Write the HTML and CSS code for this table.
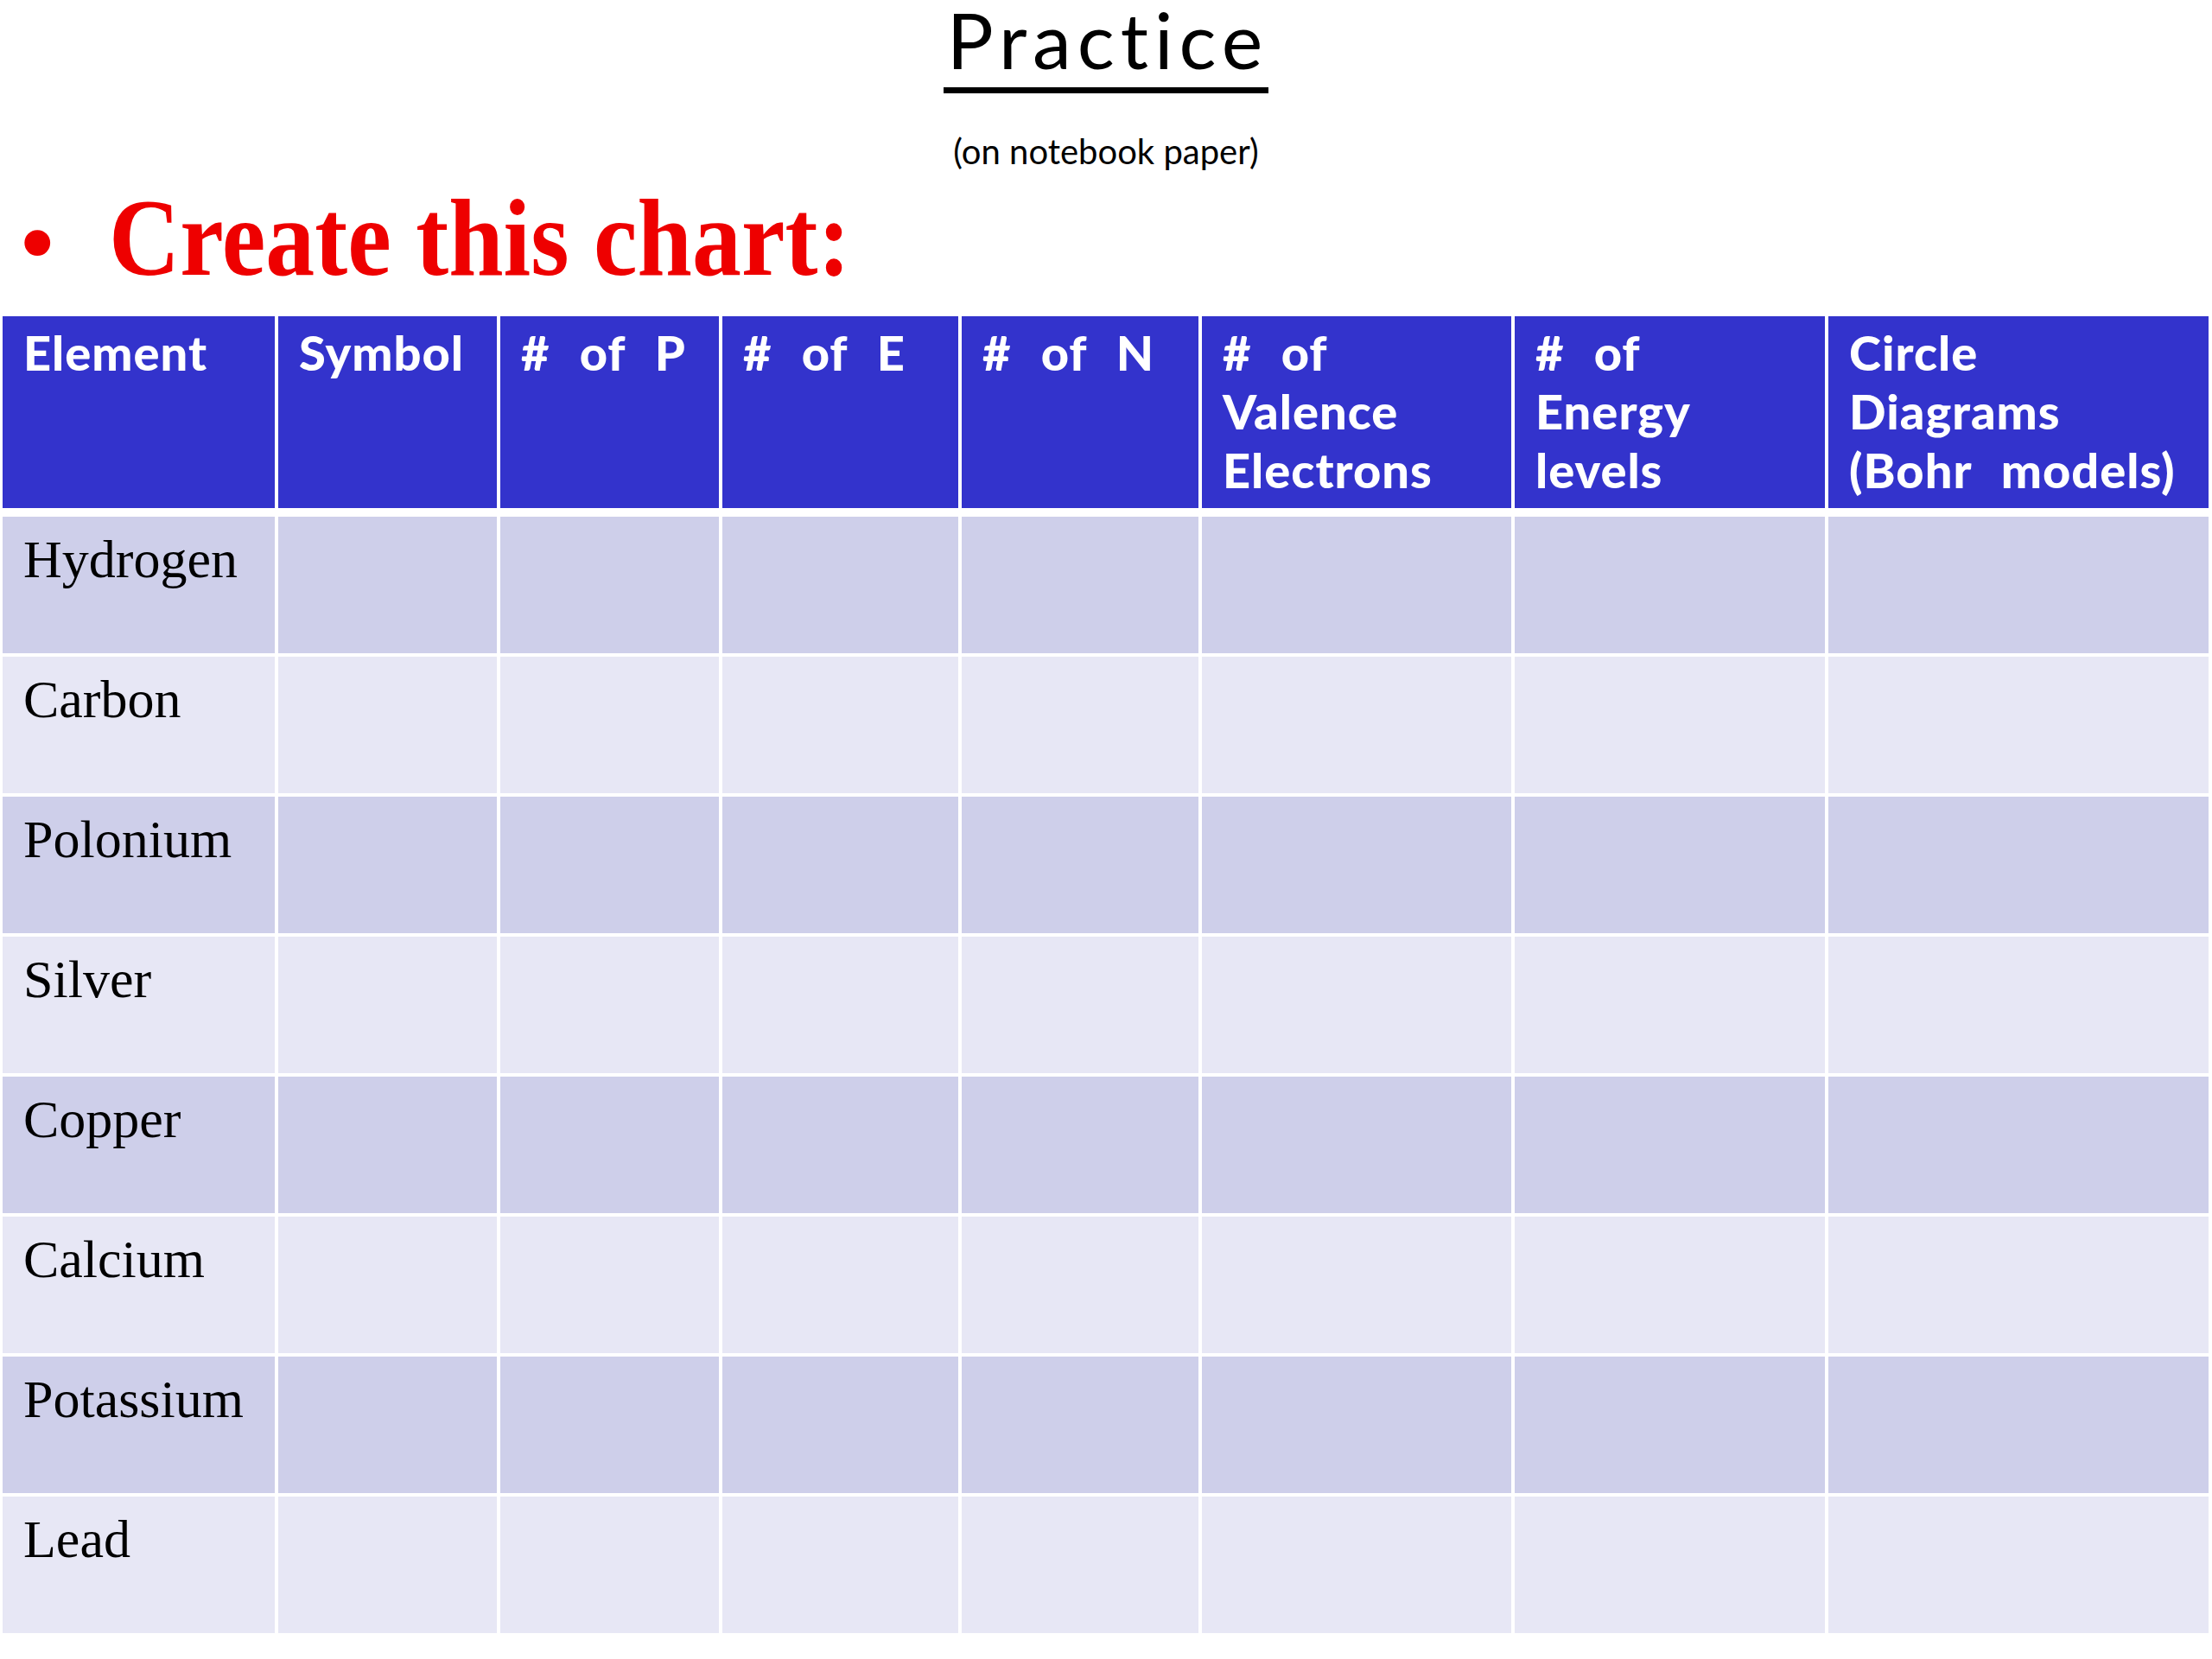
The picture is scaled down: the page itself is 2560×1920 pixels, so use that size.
FILE: index.html
```html
<!DOCTYPE html>
<html>
<head>
<meta charset="utf-8">
<link rel="stylesheet" href="styles.css">
</head>
<body>
<div class="slide">
  <header class="top">
    <h1 class="title">Practice</h1>
    <p class="sub">(on notebook paper)</p>
  </header>
  <div class="bullet-line">
    <span class="dot">•</span>
    <span class="instr">Create this chart:</span>
  </div>
  <div class="chart">
    <div class="hd">Element</div>
    <div class="hd">Symbol</div>
    <div class="hd"># of P</div>
    <div class="hd"># of E</div>
    <div class="hd"># of N</div>
    <div class="hd"># of<br>Valence<br>Electrons</div>
    <div class="hd"># of<br>Energy<br>levels</div>
    <div class="hd">Circle<br>Diagrams<br>(Bohr models)</div>

    <div class="c odd name">Hydrogen</div><div class="c odd"></div><div class="c odd"></div><div class="c odd"></div><div class="c odd"></div><div class="c odd"></div><div class="c odd"></div><div class="c odd"></div>
    <div class="c even name">Carbon</div><div class="c even"></div><div class="c even"></div><div class="c even"></div><div class="c even"></div><div class="c even"></div><div class="c even"></div><div class="c even"></div>
    <div class="c odd name">Polonium</div><div class="c odd"></div><div class="c odd"></div><div class="c odd"></div><div class="c odd"></div><div class="c odd"></div><div class="c odd"></div><div class="c odd"></div>
    <div class="c even name">Silver</div><div class="c even"></div><div class="c even"></div><div class="c even"></div><div class="c even"></div><div class="c even"></div><div class="c even"></div><div class="c even"></div>
    <div class="c odd name">Copper</div><div class="c odd"></div><div class="c odd"></div><div class="c odd"></div><div class="c odd"></div><div class="c odd"></div><div class="c odd"></div><div class="c odd"></div>
    <div class="c even name">Calcium</div><div class="c even"></div><div class="c even"></div><div class="c even"></div><div class="c even"></div><div class="c even"></div><div class="c even"></div><div class="c even"></div>
    <div class="c odd name">Potassium</div><div class="c odd"></div><div class="c odd"></div><div class="c odd"></div><div class="c odd"></div><div class="c odd"></div><div class="c odd"></div><div class="c odd"></div>
    <div class="c even name">Lead</div><div class="c even"></div><div class="c even"></div><div class="c even"></div><div class="c even"></div><div class="c even"></div><div class="c even"></div><div class="c even"></div>
  </div>
</div>
</body>
</html>
```

FILE: styles.css
```css
html, body {
  margin: 0;
  padding: 0;
  background: #ffffff;
}

.slide {
  width: 2560px;
  height: 1920px;
  overflow: hidden;
  position: relative;
  background: #ffffff;
}

.top {
  display: flex;
  flex-direction: column;
  align-items: center;
}

.title {
  margin: -11px 0 0 0;
  font-family: "Lato", "Open Sans", sans-serif;
  font-weight: 400;
  font-size: 90px;
  line-height: 112px;
  letter-spacing: 7px;
  color: #000000;
  border-bottom: 7px solid #000000;
  padding: 0 0 0 4px;
}

.sub {
  margin: 43px 0 0 0;
  font-family: "Lato", "Open Sans", sans-serif;
  font-size: 40px;
  line-height: 48px;
  color: #000000;
}

.bullet-line {
  display: flex;
  align-items: baseline;
  margin-top: 1px;
  height: 166px;
  color: #ee0000;
  font-family: "Liberation Serif", "Times New Roman", serif;
  font-weight: 700;
}

.dot {
  font-size: 110px;
  margin-left: 24px;
  width: 102px;
}

.instr {
  font-size: 128px;
  line-height: 150px;
  display: inline-block;
  transform: scaleX(0.89);
  transform-origin: left center;
  white-space: nowrap;
}

.chart {
  display: grid;
  grid-template-columns: 315px 253px 253px 273px 274px 358px 359px 440px;
  column-gap: 4px;
  row-gap: 4px;
  margin-left: 3px;
}

.hd {
  background: #3333cc;
  color: #ffffff;
  height: 222px;
  margin-bottom: 6px;
  box-sizing: border-box;
  padding: 8px 0 0 24px;
  font-family: "Lato", "Open Sans", sans-serif;
  font-weight: 900;
  font-size: 56px;
  line-height: 68px;
  letter-spacing: 1px;
  word-spacing: 20px;
  white-space: nowrap;
}

.c {
  height: 158px;
  box-sizing: border-box;
  padding: 14px 0 0 24px;
  font-family: "Liberation Serif", "Times New Roman", serif;
  font-size: 62px;
  line-height: 71px;
  color: #000000;
}

.odd {
  background: #cecfea;
}

.even {
  background: #e7e7f5;
}
```
